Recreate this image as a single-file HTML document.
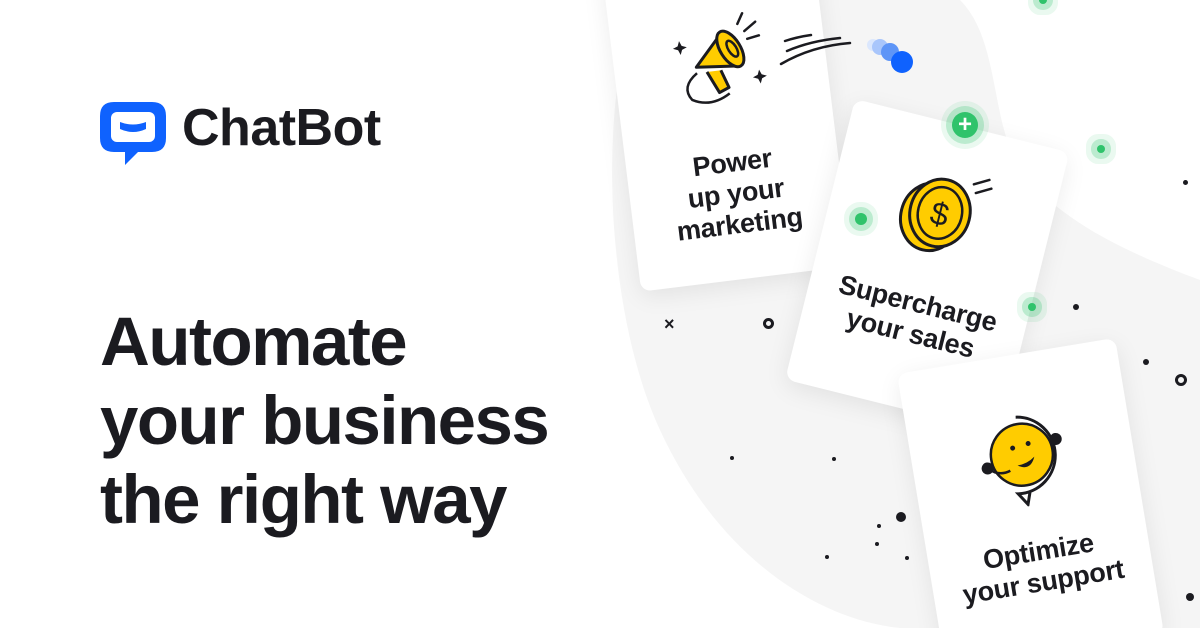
<!DOCTYPE html>
<html><head><meta charset="utf-8"><style>
*{margin:0;padding:0;box-sizing:border-box}
html,body{width:1200px;height:628px;overflow:hidden}
body{background:#fff;position:relative;font-family:"Liberation Sans",Arial,sans-serif;color:#1b1b20}
.card{position:absolute;background:#fff;border-radius:10px;box-shadow:0 6px 24px rgba(0,0,0,.08);transform-origin:0 0}
.t{position:absolute;left:-10px;width:calc(100% + 20px);text-align:center;font-weight:700;font-size:27px;line-height:31px;color:#1b1b20;letter-spacing:-.3px}
.d{position:absolute;border-radius:50%;background:#1b1b20}
.g{position:absolute;border-radius:50%;background:#2fc36b;box-shadow:0 0 0 6px rgba(47,195,107,.25),0 0 0 11px rgba(47,195,107,.1)}
</style></head><body>
<div style="position:absolute;left:0;top:0;width:1200px;height:628px;overflow:hidden">
<svg style="position:absolute;left:0;top:0" width="1200" height="628">
<path d="M640 0 C600 80 600 300 660 430 C720 560 820 620 900 628 L1200 628 L1200 280 C1120 250 1060 220 1020 170 C990 120 1000 40 960 0 Z" fill="#f5f5f5"/>
<circle cx="873" cy="45" r="6" fill="#dbe7fd"/><circle cx="880" cy="47" r="8" fill="#a9c6fb"/><circle cx="890" cy="52" r="9" fill="#5e95f7"/><circle cx="902" cy="62" r="11" fill="#0f62fe"/>
</svg>
<svg style="position:absolute;left:100px;top:100px" width="68" height="68" viewBox="0 0 68 68">
<path d="M14 2 H52 Q66 2 66 16 V38 Q66 52 52 52 H38 L25 65 V52 H14 Q0 52 0 38 V16 Q0 2 14 2 Z" fill="#0f62fe"/>
<rect x="11" y="12" width="44" height="30" rx="6" fill="#fff"/>
<path d="M20 22 Q33 27 46 22 V29 Q33 35 20 29 Z" fill="#0f62fe"/>
</svg>
<div style="position:absolute;left:182px;top:97px;font-size:52px;font-weight:700;letter-spacing:-.5px;line-height:62px">ChatBot</div>
<div style="position:absolute;left:100px;top:302px;font-size:69px;font-weight:700;line-height:79px;letter-spacing:-1.5px">Automate<br>your business<br>the right way</div>

<div class="card" style="left:602px;top:-28px;width:212px;height:322px;transform:rotate(-7deg)">
<svg style="position:absolute;left:60px;top:54px" width="100" height="100" viewBox="0 0 100 100">
<path d="M22 52 L50 22 L66 56 Z" fill="#ffcc00" stroke="#1b1b20" stroke-width="3" stroke-linejoin="round"/>
<ellipse cx="58" cy="38" rx="10" ry="20" transform="rotate(-25 58 38)" fill="#ffcc00" stroke="#1b1b20" stroke-width="3"/>
<ellipse cx="60" cy="38" rx="4" ry="9" transform="rotate(-25 60 38)" fill="none" stroke="#1b1b20" stroke-width="2.5"/>
<path d="M32 58 L42 80 L52 76 L46 58" fill="#ffcc00" stroke="#1b1b20" stroke-width="3" stroke-linejoin="round"/>
<path d="M22 58 Q4 70 14 84 Q32 94 52 82" fill="none" stroke="#1b1b20" stroke-width="2.5"/>
<path d="M68 14 L74 4 M74 22 L86 14 M76 30 L88 28" stroke="#1b1b20" stroke-width="2.5" stroke-linecap="round"/>
<path d="M8 24 l2 5 5 2 -5 2 -2 5 -2 -5 -5 -2 5 -2z M84 62 l2 5 5 2 -5 2 -2 5 -2 -5 -5 -2 5 -2z" fill="#1b1b20"/>
</svg>
<div class="t" style="top:190px">Power<br>up your<br>marketing</div>
</div>

<div class="card" style="left:855px;top:99px;width:221px;height:289px;transform:rotate(14deg)">
<svg style="position:absolute;left:60px;top:44px" width="96" height="96" viewBox="0 0 96 96">
<ellipse cx="42" cy="52" rx="30" ry="34" fill="#ffcc00" stroke="#1b1b20" stroke-width="3"/>
<ellipse cx="50" cy="46" rx="30" ry="34" fill="#ffcc00" stroke="#1b1b20" stroke-width="3"/>
<ellipse cx="50" cy="46" rx="22" ry="26" fill="none" stroke="#1b1b20" stroke-width="2.5"/>
<text x="50" y="58" text-anchor="middle" font-size="32" font-family="Liberation Sans" fill="#1b1b20">$</text>
<path d="M76 10 L90 2 M80 18 L94 10" stroke="#1b1b20" stroke-width="2.5" stroke-linecap="round"/>
</svg>
<div class="t" style="top:168px">Supercharge<br>your sales</div>
</div>

<div class="card" style="left:897px;top:374px;width:221px;height:300px;transform:rotate(-9.4deg)">
<svg style="position:absolute;left:60px;top:52px" width="100" height="100" viewBox="0 0 100 100">
<path d="M50 10 A38 38 0 1 1 40 86 L48 98 L52 86" fill="#fff" stroke="#1b1b20" stroke-width="3"/>
<circle cx="50" cy="48" r="31" fill="#ffcc00" stroke="#1b1b20" stroke-width="2.5"/>
<circle cx="14" cy="56" r="6" fill="#1b1b20"/><circle cx="86" cy="38" r="6" fill="#1b1b20"/>
<path d="M14 56 Q24 66 36 62" stroke="#1b1b20" stroke-width="2.5" fill="none"/>
<path d="M44 58 Q56 66 62 52 Q54 58 44 58Z" fill="#1b1b20"/><circle cx="42" cy="40" r="2.5" fill="#1b1b20"/><circle cx="58" cy="38" r="2.5" fill="#1b1b20"/>
</svg>
<div class="t" style="top:183px">Optimize<br>your support</div>
</div>

<svg style="position:absolute;left:0;top:0" width="1200" height="628">
<path d="M781 64 Q812 46 850 43 M787 51 Q810 41 840 38 M785 41 Q797 37 811 35" stroke="#1b1b20" stroke-width="2.5" fill="none" stroke-linecap="round"/>
</svg>

<div class="g" style="left:952px;top:112px;width:26px;height:26px;color:#fff;font-size:24px;font-weight:700;text-align:center;line-height:25px">+</div>
<div class="g" style="left:855px;top:213px;width:12px;height:12px"></div>
<div class="g" style="left:1097px;top:145px;width:8px;height:8px"></div>
<div class="g" style="left:1028px;top:303px;width:8px;height:8px"></div>
<div class="g" style="left:1039px;top:-4px;width:8px;height:8px"></div>
<div class="d" style="left:1073px;top:304px;width:6px;height:6px"></div>
<div class="d" style="left:1183px;top:180px;width:5px;height:5px"></div>
<div class="d" style="left:1143px;top:359px;width:6px;height:6px"></div>
<div class="d" style="left:896px;top:512px;width:10px;height:10px"></div>
<div class="d" style="left:877px;top:524px;width:4px;height:4px"></div>
<div class="d" style="left:875px;top:542px;width:4px;height:4px"></div>
<div class="d" style="left:832px;top:457px;width:4px;height:4px"></div>
<div class="d" style="left:730px;top:456px;width:4px;height:4px"></div>
<div class="d" style="left:825px;top:555px;width:4px;height:4px"></div>
<div class="d" style="left:905px;top:556px;width:4px;height:4px"></div>
<div class="d" style="left:1186px;top:593px;width:8px;height:8px"></div>
<div style="position:absolute;left:664px;top:314px;font-size:18px;font-weight:700">×</div>
<div style="position:absolute;left:763px;top:318px;width:11px;height:11px;border:3px solid #1b1b20;border-radius:50%"></div>
<div style="position:absolute;left:1175px;top:374px;width:12px;height:12px;border:3px solid #1b1b20;border-radius:50%"></div>
</div>
</body></html>
